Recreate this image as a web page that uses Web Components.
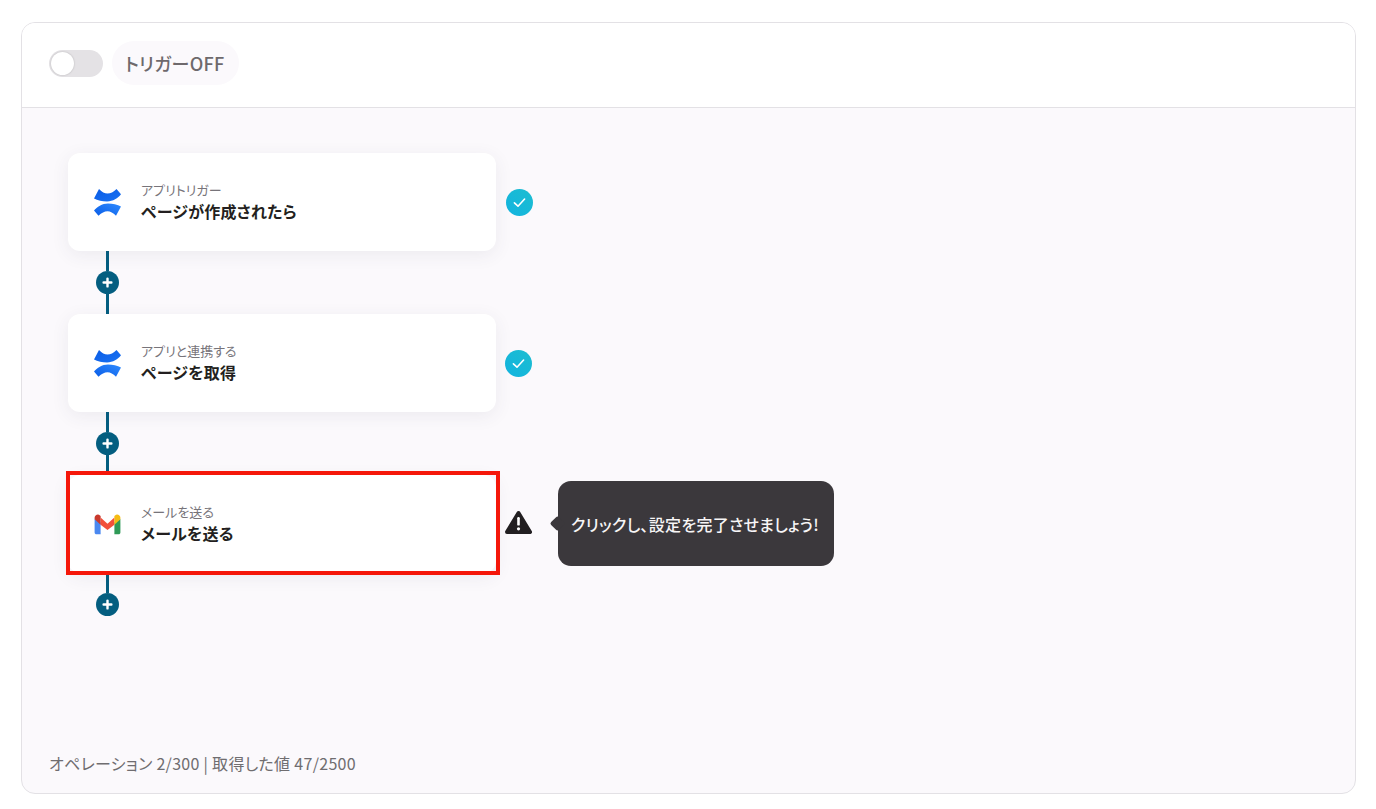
<!DOCTYPE html>
<html lang="ja">
<head>
<meta charset="utf-8">
<title>Flow</title>
<style>
  html, body { margin: 0; height: 100%; background: #fff; }
  body {
    font-family: "Noto Sans CJK JP", "Noto Sans", sans-serif;
    font-feature-settings: "palt";
    padding: 22px 20px 15px 21px;
    box-sizing: border-box;
  }
</style>
</head>
<body>
<flow-panel usage="オペレーション 2/300 | 取得した値 47/2500">
  <flow-step caption="アプリトリガー" title="ページが作成されたら" icon="confluence" status="ok"></flow-step>
  <flow-link></flow-link>
  <flow-step caption="アプリと連携する" title="ページを取得" icon="confluence" status="ok" nudge></flow-step>
  <flow-link></flow-link>
  <flow-step caption="メールを送る" title="メールを送る" icon="gmail" status="warn" marked>クリックし、設定を完了させましょう!</flow-step>
  <flow-link last></flow-link>
</flow-panel>

<script>
const ICONS = {
  confluence: `
    <svg width="27" height="27" viewBox="0 0 27 27" fill="none">
      <defs>
        <linearGradient id="cfa" x1="0" y1="0" x2="1" y2="1">
          <stop offset="0" stop-color="#0a5ce6"/>
          <stop offset="1" stop-color="#1a72f2"/>
        </linearGradient>
        <linearGradient id="cfb" x1="1" y1="0" x2="0" y2="1">
          <stop offset="0" stop-color="#0a5ce6"/>
          <stop offset="1" stop-color="#2f8bff"/>
        </linearGradient>
      </defs>
      <path d="M5 0C8 3 10.5 4.6 13.5 4.6C16.5 4.6 19.5 3 22.5 0L27 5.2C24 9 19 12.4 13 12.4C8.5 12.4 3.5 11.4 0 9.4Z" fill="url(#cfa)"/>
      <path d="M5 0C8 3 10.5 4.6 13.5 4.6C16.5 4.6 19.5 3 22.5 0L27 5.2C24 9 19 12.4 13 12.4C8.5 12.4 3.5 11.4 0 9.4Z" fill="url(#cfb)" transform="rotate(180 13.5 13.4)"/>
    </svg>`,
  gmail: `
    <svg width="27" height="21" viewBox="0 0 27 21" fill="none">
      <path d="M.6 5V18.4C.6 19.5 1.4 20.3 2.5 20.3H6.6V8.6Z" fill="#4a88f0"/>
      <path d="M20.4 8.6V20.3H24.5C25.6 20.3 26.4 19.5 26.4 18.4V5Z" fill="#2f9a57"/>
      <path d="M6.6 3.4L13.5 9.8L20.4 3.4V10.8L13.5 16L6.6 10.8Z" fill="#f2503b"/>
      <path d="M.6 5.2V3.8C.6 1 4 -.4 6 1.4L6.6 2V10.8Z" fill="#c9392c"/>
      <path d="M26.4 5.2V3.8C26.4 1 23 -.4 21 1.4L20.4 2V10.8Z" fill="#f5bb12"/>
    </svg>`
};

const BADGES = {
  ok: `
    <svg width="27" height="27" viewBox="0 0 27 27" fill="none">
      <defs>
        <linearGradient id="ok" x1="0" y1="1" x2="1" y2="0">
          <stop offset="0" stop-color="#13b4e0"/>
          <stop offset="1" stop-color="#1cbdd0"/>
        </linearGradient>
      </defs>
      <circle cx="13.5" cy="13.5" r="13.5" fill="url(#ok)"/>
      <path d="M8.4 13.8L12 17.2L18.6 10" stroke="#fff" stroke-width="1.6" stroke-linecap="round" stroke-linejoin="round"/>
    </svg>`,
  warn: `
    <svg width="27" height="25" viewBox="0 0 27 25" fill="none">
      <path d="M13.5 3L25 22H2Z" fill="#221f21" stroke="#221f21" stroke-width="4" stroke-linejoin="round"/>
      <rect x="12.2" y="7" width="2.6" height="8.6" rx="1.2" fill="#fff"/>
      <circle cx="13.5" cy="18.8" r="1.6" fill="#fff"/>
    </svg>`
};

class FlowPanel extends HTMLElement {
  constructor() {
    super();
    this.attachShadow({ mode: 'open' });
  }

  connectedCallback() {
    const usage = this.getAttribute('usage') || '';
    this.shadowRoot.innerHTML = `
      <style>
        :host {
          display: flex;
          flex-direction: column;
          height: 100%;
          box-sizing: border-box;
          border: 1px solid #e3e1e5;
          border-radius: 14px;
          overflow: hidden;
          background: #fbf9fc;
        }
        header {
          display: flex;
          align-items: center;
          gap: 9px;
          height: 80px;
          padding: 0 27px 4px;
          flex: none;
          background: #fff;
          border-bottom: 1px solid #e3e1e5;
        }
        .toggle {
          width: 54px;
          height: 27px;
          border-radius: 14px;
          background: #e4e2e5;
          padding: 2px 0 2px 2px;
          box-sizing: border-box;
        }
        .knob {
          display: block;
          width: 23px;
          height: 23px;
          border-radius: 50%;
          background: #fff;
          box-shadow: 0 0 2px rgba(0, 0, 0, .22);
        }
        .label {
          display: flex;
          align-items: center;
          height: 44px;
          padding: 0 14px 0 13px;
          border-radius: 22px;
          background: #fbf9fc;
          color: #6e696c;
          font-size: 18px;
          font-weight: 500;
          letter-spacing: .3px;
        }
        main {
          flex: 1;
          display: flex;
          flex-direction: column;
          align-items: flex-start;
          padding: 45px 46px 0;
        }
        footer {
          flex: none;
          padding: 0 27px 19px;
          color: #6f6d70;
          font-size: 16px;
          letter-spacing: .3px;
          line-height: 21px;
        }
      </style>
      <header>
        <div class="toggle"><span class="knob"></span></div>
        <div class="label">トリガーOFF</div>
      </header>
      <main><slot></slot></main>
      <footer>${usage}</footer>
    `;
  }
}

class FlowStep extends HTMLElement {
  constructor() {
    super();
    this.attachShadow({ mode: 'open' });
  }

  connectedCallback() {
    const caption = this.getAttribute('caption') || '';
    const title = this.getAttribute('title') || '';
    const icon = ICONS[this.getAttribute('icon')] || '';
    const badge = BADGES[this.getAttribute('status')] || '';
    this.shadowRoot.innerHTML = `
      <style>
        :host {
          display: flex;
          align-items: center;
          height: 98px;
          flex: none;
        }
        .card {
          position: relative;
          display: flex;
          align-items: center;
          width: 428px;
          height: 98px;
          box-sizing: border-box;
          padding-left: 26px;
          border-radius: 12px;
          background: #fff;
          box-shadow: 0 4px 18px rgba(70, 60, 90, .08);
        }
        .icon {
          display: flex;
          justify-content: center;
          width: 27px;
          margin-right: 20px;
        }
        .caption {
          color: #77747a;
          font-size: 13px;
          line-height: 16px;
        }
        .title {
          margin-top: 2px;
          color: #231f20;
          font-size: 16px;
          font-weight: 700;
          letter-spacing: .2px;
          line-height: 22px;
        }
        :host([marked]) .card::after {
          content: "";
          position: absolute;
          inset: -4px -4px -2px -2px;
          border: 4px solid #f5170a;
        }
        .badge {
          display: flex;
          margin-left: 10px;
          margin-top: 1px;
        }
        :host([nudge]) .badge { margin-left: 9px; }
        :host([status="warn"]) .badge { margin-left: 9px; margin-top: -3px; }
        .tip {
          position: relative;
          display: none;
          align-items: center;
          height: 85px;
          margin-left: 26px;
          margin-top: -1px;
          padding: 0 15px 0 13px;
          border-radius: 13px;
          background: #3b383c;
          color: #f7f5f6;
          font-size: 16px;
          font-weight: 500;
          letter-spacing: .3px;
          white-space: nowrap;
        }
        .tip.on { display: flex; }
        .tip::before {
          content: "";
          position: absolute;
          left: -6px;
          top: 37px;
          width: 11px;
          height: 11px;
          background: #3b383c;
          transform: rotate(45deg);
          border-radius: 2px;
        }
      </style>
      <div class="card">
        <div class="icon">${icon}</div>
        <div>
          <div class="caption">${caption}</div>
          <div class="title">${title}</div>
        </div>
      </div>
      <div class="badge">${badge}</div>
      <div class="tip ${this.textContent.trim() ? 'on' : ''}"><slot></slot></div>
    `;
  }
}

class FlowLink extends HTMLElement {
  constructor() {
    super();
    this.attachShadow({ mode: 'open' });
  }

  connectedCallback() {
    this.shadowRoot.innerHTML = `
      <style>
        :host {
          display: flex;
          flex-direction: column;
          align-items: center;
          height: 63px;
          width: 23px;
          margin-left: 28px;
          flex: none;
        }
        :host([last]) { height: 43px; }
        .line { flex: 1; width: 3px; background: #045e80; }
        :host([last]) .line.end { display: none; }
        .plus { flex: none; display: flex; }
      </style>
      <div class="line"></div>
      <div class="plus">
        <svg width="23" height="23" viewBox="0 0 23 23">
          <circle cx="11.5" cy="11.5" r="11.5" fill="#045e80"/>
          <path d="M11.5 7.6V15.4M7.6 11.5H15.4" stroke="#fff" stroke-width="2.4" stroke-linecap="round"/>
        </svg>
      </div>
      <div class="line end"></div>
    `;
  }
}

customElements.define('flow-panel', FlowPanel);
customElements.define('flow-step', FlowStep);
customElements.define('flow-link', FlowLink);
</script>
</body>
</html>
